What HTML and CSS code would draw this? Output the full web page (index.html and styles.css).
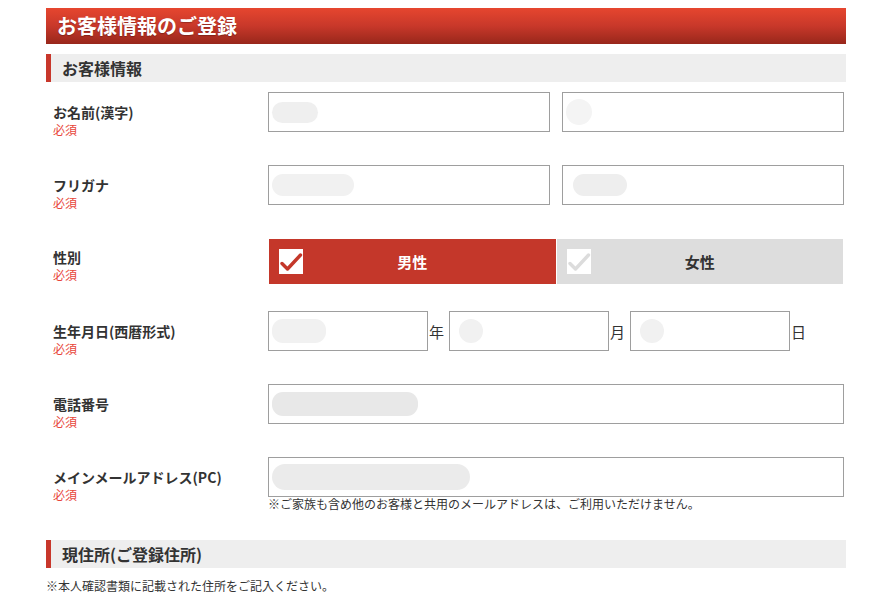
FILE: index.html
```html
<!DOCTYPE html>
<html lang="ja">
<head>
<meta charset="utf-8">
<title>お客様情報のご登録</title>
<link rel="stylesheet" href="styles.css">
</head>
<body>
<div class="page">
  <h1 class="title">お客様情報のご登録</h1>

  <h2 class="section">お客様情報</h2>

  <div class="form">
    <div class="row">
      <div class="label"><div class="name">お名前(漢字)</div><div class="req">必須</div></div>
      <div class="field pair">
        <div class="input"><span class="blob b-name1"></span></div>
        <div class="input"><span class="blob b-name2"></span></div>
      </div>
    </div>

    <div class="row">
      <div class="label"><div class="name">フリガナ</div><div class="req">必須</div></div>
      <div class="field pair">
        <div class="input"><span class="blob b-kana1"></span></div>
        <div class="input"><span class="blob b-kana2"></span></div>
      </div>
    </div>

    <div class="row row-gender">
      <div class="label"><div class="name">性別</div><div class="req">必須</div></div>
      <div class="field gender">
        <div class="gbtn on">
          <span class="check"><svg width="24" height="25" viewBox="0 0 24 25"><path d="M3 14.5 L8.5 20 L21.5 6" fill="none" stroke="#c4372a" stroke-width="3.4" stroke-linecap="round" stroke-linejoin="round"/></svg></span>
          <span class="gtext">男性</span>
        </div>
        <div class="gbtn">
          <span class="check"><svg width="24" height="25" viewBox="0 0 24 25"><path d="M3 14.5 L8.5 20 L21.5 6" fill="none" stroke="#dcdcdc" stroke-width="3.4" stroke-linecap="round" stroke-linejoin="round"/></svg></span>
          <span class="gtext">女性</span>
        </div>
      </div>
    </div>

    <div class="row">
      <div class="label"><div class="name">生年月日(西暦形式)</div><div class="req">必須</div></div>
      <div class="field date">
        <div class="input short"><span class="blob b-year"></span></div><span class="unit">年</span>
        <div class="input short"><span class="blob b-dot"></span></div><span class="unit">月</span>
        <div class="input short"><span class="blob b-dot"></span></div><span class="unit">日</span>
      </div>
    </div>

    <div class="row">
      <div class="label"><div class="name">電話番号</div><div class="req">必須</div></div>
      <div class="field">
        <div class="input"><span class="blob b-tel"></span></div>
      </div>
    </div>

    <div class="row row-last">
      <div class="label"><div class="name">メインメールアドレス(PC)</div><div class="req">必須</div></div>
      <div class="field">
        <div class="input"><span class="blob b-mail"></span></div>
        <p class="note">※ご家族も含め他のお客様と共用のメールアドレスは、ご利用いただけません。</p>
      </div>
    </div>
  </div>

  <h2 class="section section-2">現住所(ご登録住所)</h2>
  <p class="note note-addr">※本人確認書類に記載された住所をご記入ください。</p>
</div>
</body>
</html>
```

FILE: styles.css
```css
* { box-sizing: border-box; }

html, body {
  margin: 0;
  padding: 0;
  background: #ffffff;
}

body {
  font-family: "Noto Sans CJK JP", "Noto Sans", sans-serif;
  color: #333333;
}

.page {
  width: 800px;
  margin-left: 46px;
  padding-top: 8px;
}

.title {
  margin: 0;
  height: 36px;
  line-height: 36px;
  padding-left: 11px;
  font-size: 20px;
  font-weight: bold;
  color: #ffffff;
  background: linear-gradient(to bottom, #e6462f 0%, #c8382a 50%, #98271b 100%);
  text-shadow: 0 1px 1px rgba(0, 0, 0, 0.25);
}

.section {
  margin: 10px 0 0;
  height: 28px;
  line-height: 28px;
  background: #eeeeee;
  border-left: 5px solid #c8372b;
  padding-left: 11px;
  font-size: 16px;
  font-weight: bold;
  color: #333333;
}

.section-2 {
  margin-top: 29px;
}

.form {
  padding-top: 10px;
}

.row {
  display: flex;
  align-items: flex-start;
  padding-bottom: 33px;
}

.row-gender {
  margin-top: 1px;
  padding-bottom: 27px;
}

.row-last {
  padding-bottom: 0;
}

.label {
  width: 222px;
  height: 40px;
  flex: none;
  padding-left: 7px;
  padding-top: 11px;
  line-height: 18px;
}

.row-gender .label {
  height: 45px;
  padding-top: 9px;
}

.name {
  font-size: 14px;
  font-weight: bold;
  color: #333333;
}

.req {
  font-size: 12px;
  color: #e8463a;
}

.field {
  width: 576px;
  flex: none;
}

.pair {
  display: flex;
  gap: 12px;
}

.pair .input {
  flex: 1;
}

.input {
  height: 40px;
  border: 1px solid #9e9e9e;
  background: #ffffff;
  display: flex;
  align-items: center;
  padding-left: 3px;
}

.blob {
  display: block;
  height: 21px;
  border-radius: 11px;
  background: #efefef;
}

.b-name1 { width: 46px; }
.b-name2 { width: 26px; height: 26px; border-radius: 13px; background: #f4f4f4; }
.b-kana1 { width: 82px; height: 22px; background: #f1f1f1; }
.b-kana2 { width: 54px; margin-left: 7px; height: 22px; background: #eeeeee; }
.b-year { width: 54px; height: 24px; background: #f1f1f1; }
.b-dot { width: 24px; height: 24px; border-radius: 12px; margin-left: 6px; background: #f1f1f1; }
.b-tel { width: 146px; height: 24px; background: #e8e8e8; }
.b-mail { width: 198px; height: 26px; border-radius: 13px; background: #ebebeb; }

.gender {
  display: flex;
  gap: 1px;
  padding: 0 1px;
}

.gbtn {
  flex: 1;
  height: 45px;
  background: #dddddd;
  display: flex;
  align-items: center;
  padding-left: 10px;
}

.gbtn.on {
  background: #c4372a;
}

.check {
  width: 24px;
  height: 25px;
  background: #ffffff;
  flex: none;
  display: flex;
}

.gtext {
  flex: 1;
  text-align: center;
  padding-right: 34px;
  font-size: 15px;
  font-weight: bold;
  color: #333333;
}

.gbtn.on .gtext {
  color: #ffffff;
}

.date {
  display: flex;
  align-items: center;
}

.input.short {
  width: 160px;
  flex: none;
}

.unit {
  font-size: 15px;
  width: 21px;
  padding-left: 1px;
  color: #333333;
}

.note {
  margin: 0;
  font-size: 12px;
  line-height: 14px;
  color: #333333;
}

.note-addr {
  margin-top: 10px;
  line-height: 16px;
}
```
